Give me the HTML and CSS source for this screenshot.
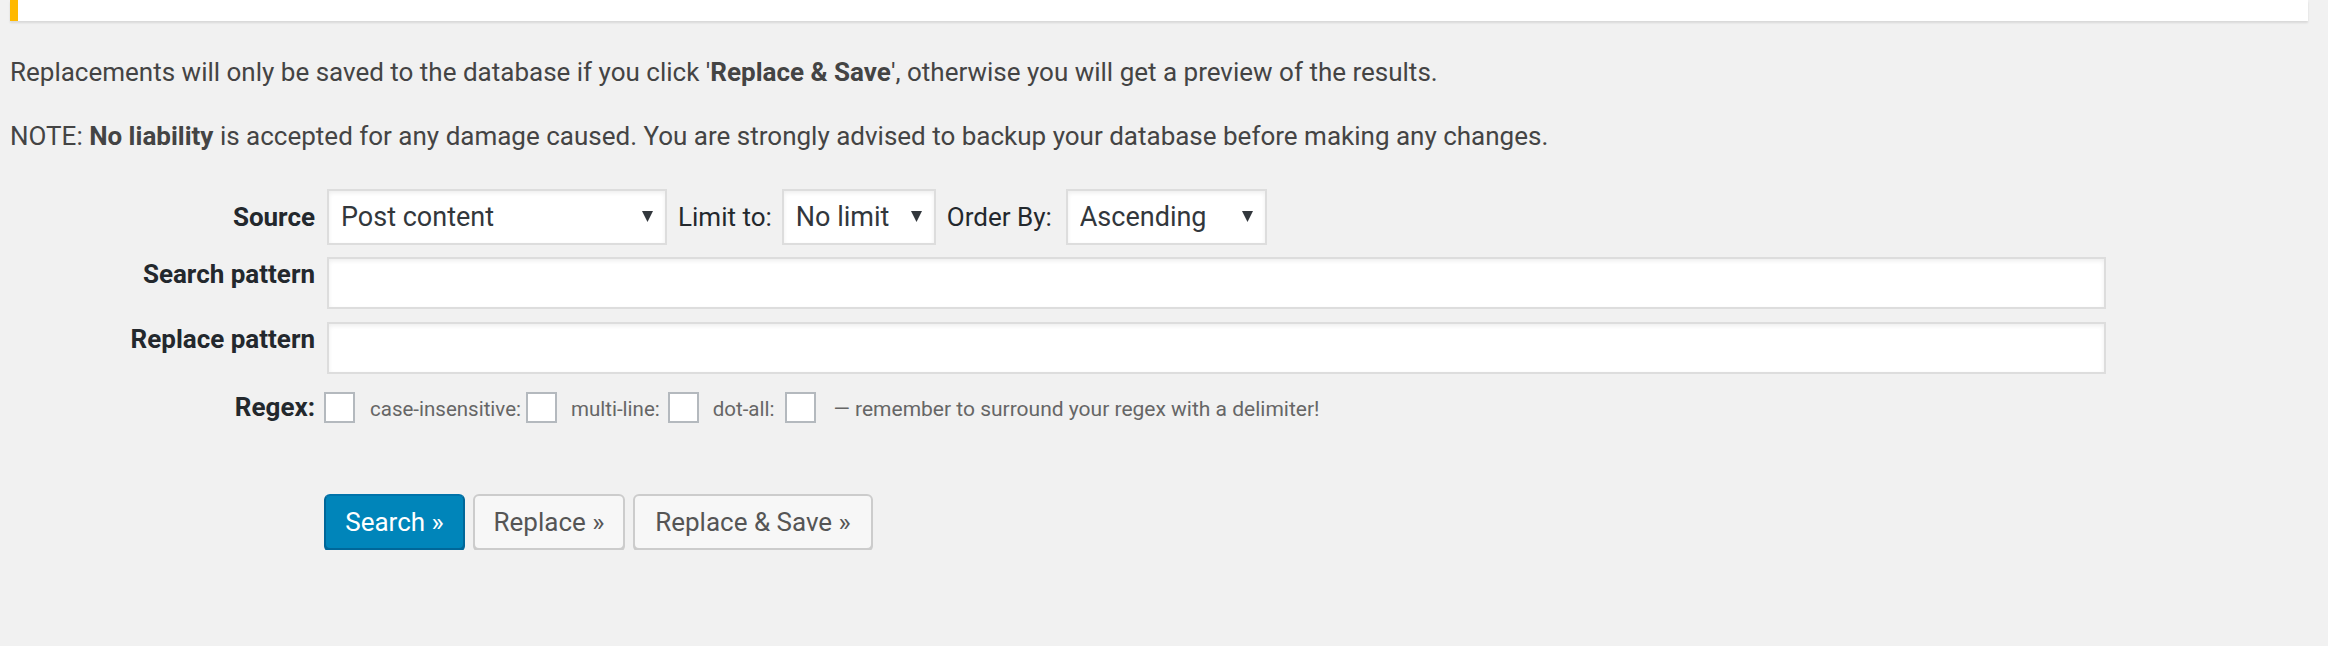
FILE: index.html
```html
<!DOCTYPE html>
<html lang="en">
<head>
<meta charset="utf-8">
<title>Search &amp; Replace</title>
<link rel="stylesheet" href="styles.css">
</head>
<body>
<div class="notice"></div>
<div class="wrap">
  <p class="intro">Replacements will only be saved to the database if you click '<b>Replace &amp; Save</b>', otherwise you will get a preview of the results.</p>
  <p class="intro">NOTE: <b>No liability</b> is accepted for any damage caused. You are strongly advised to backup your database before making any changes.</p>

  <form class="sr-form">
    <div class="row row-source">
      <label class="lbl">Source</label>
      <div class="field field-inputs">
        <div class="sel sel-source">
          <select><option>Post content</option></select>
          <svg class="arrow" viewBox="0 0 11 11" width="11" height="11"><polygon points="0,0 11,0 5.5,11"/></svg>
        </div>
        <span class="inline-lbl">Limit to:</span>
        <div class="sel sel-limit">
          <select><option>No limit</option></select>
          <svg class="arrow" viewBox="0 0 11 11" width="11" height="11"><polygon points="0,0 11,0 5.5,11"/></svg>
        </div>
        <span class="inline-lbl inline-lbl-order">Order By:</span>
        <div class="sel sel-order">
          <select><option>Ascending</option></select>
          <svg class="arrow" viewBox="0 0 11 11" width="11" height="11"><polygon points="0,0 11,0 5.5,11"/></svg>
        </div>
      </div>
    </div>

    <div class="row row-text row-search">
      <label class="lbl lbl-top">Search pattern</label>
      <div class="field field-inputs"><input class="text-input" type="text"></div>
    </div>

    <div class="row row-text row-replace">
      <label class="lbl lbl-top">Replace pattern</label>
      <div class="field field-inputs"><input class="text-input" type="text"></div>
    </div>

    <div class="row row-regex">
      <label class="lbl">Regex:</label>
      <div class="field">
        <span class="cb"></span>
        <span class="opt opt-case">case-insensitive:</span><span class="cb"></span>
        <span class="opt opt-multi">multi-line:</span><span class="cb"></span>
        <span class="opt opt-dot">dot-all:</span><span class="cb"></span>
        <span class="opt opt-note">— remember to surround your regex with a delimiter!</span>
      </div>
    </div>

    <div class="row row-buttons">
      <span class="lbl"></span>
      <div class="field buttons">
        <button type="button" class="btn btn-primary">Search »</button>
        <button type="button" class="btn btn-secondary btn-replace">Replace »</button>
        <button type="button" class="btn btn-secondary btn-save">Replace &amp; Save »</button>
      </div>
    </div>
  </form>
</div>
</body>
</html>
```
FILE: styles.css
```css
html, body {
  margin: 0;
  padding: 0;
  background: #f1f1f1;
}

body {
  font-family: Roboto, "Liberation Sans", sans-serif;
  font-size: 26px;
  color: #444;
}

.notice {
  height: 21px;
  margin: 0 20px 0 10px;
  background: #fff;
  border-left: 8px solid #ffb900;
  box-shadow: 0 2px 2px rgba(0, 0, 0, 0.1);
}

.wrap {
  padding: 0 20px 0 10px;
}

.intro {
  margin: 32px 0 25px;
  line-height: 39px;
}

.intro + .intro {
  margin-top: 25px;
}

.intro b {
  font-weight: 700;
}

.sr-form {
  margin-top: 33px;
}

.row {
  display: flex;
  column-gap: 9px;
}

.lbl {
  flex: none;
  width: 305px;
  text-align: right;
  font-weight: 700;
  color: #23282d;
  line-height: 32px;
}

.field {
  display: flex;
  align-items: center;
}

.field-inputs {
  padding-left: 3px;
}

.row-source {
  height: 56px;
  align-items: center;
}

.sel {
  position: relative;
  flex: none;
}

.sel select {
  display: block;
  width: 100%;
  height: 56px;
  margin: 0;
  padding: 0 36px 0 12px;
  border: 2px solid #ddd;
  border-radius: 0;
  background: #fff;
  box-shadow: inset 0 2px 4px rgba(0, 0, 0, 0.07);
  font-family: Roboto, "Liberation Sans", sans-serif;
  font-size: 27px;
  color: #32373c;
  -webkit-appearance: none;
  appearance: none;
}

.sel .arrow {
  position: absolute;
  right: 14px;
  top: 22px;
  fill: #32373c;
  pointer-events: none;
}

.sel-source { width: 340px; }
.sel-limit { width: 154px; }
.sel-order { width: 201px; }

.inline-lbl {
  margin: 0 10px 0 11px;
  color: #23282d;
  line-height: 32px;
}

.inline-lbl-order {
  margin-right: 14px;
}

.row-search {
  margin-top: 12px;
}

.row-replace {
  margin-top: 13px;
}

.row-text {
  align-items: flex-start;
}

.lbl-top {
  margin-top: 1px;
}

.text-input {
  display: block;
  width: 1779px;
  height: 52px;
  margin: 0;
  padding: 0 10px;
  box-sizing: border-box;
  border: 2px solid #ddd;
  background: #fff;
  box-shadow: inset 0 2px 4px rgba(0, 0, 0, 0.07);
  font: 27px Roboto, "Liberation Sans", sans-serif;
  color: #32373c;
}

.row-regex {
  margin-top: 17px;
  height: 32px;
  align-items: center;
}

.cb {
  flex: none;
  width: 31px;
  height: 31px;
  box-sizing: border-box;
  border: 2px solid #b4b9be;
  background: #fff;
}

.opt {
  flex: none;
  font-size: 20.5px;
  color: #666;
  line-height: 24px;
  padding-top: 4px;
  white-space: nowrap;
}

.opt-case { margin: 0 5px 0 15px; }
.opt-multi { margin: 0 8px 0 14px; }
.opt-dot { margin: 0 11px 0 14px; }
.opt-note { margin-left: 17px; font-size: 21px; }

.row-buttons {
  margin-top: 71px;
}

.buttons {
  gap: 8px;
  align-items: flex-start;
}

.btn {
  height: 56px;
  margin: 0;
  padding: 0;
  border-radius: 6px;
  border: 2px solid #ccc;
  font-family: Roboto, "Liberation Sans", sans-serif;
  font-size: 26px;
  line-height: 52px;
  text-align: center;
  white-space: nowrap;
  cursor: pointer;
}

.btn-primary {
  width: 141px;
  background: #0085ba;
  border-color: #0073aa #006799 #006799;
  box-shadow: 0 2px 0 #006799;
  color: #fff;
}

.btn-secondary {
  background: #f7f7f7;
  color: #555;
  box-shadow: 0 2px 0 #ccc;
}

.btn-replace { width: 152px; }
.btn-save { width: 240px; }
```
